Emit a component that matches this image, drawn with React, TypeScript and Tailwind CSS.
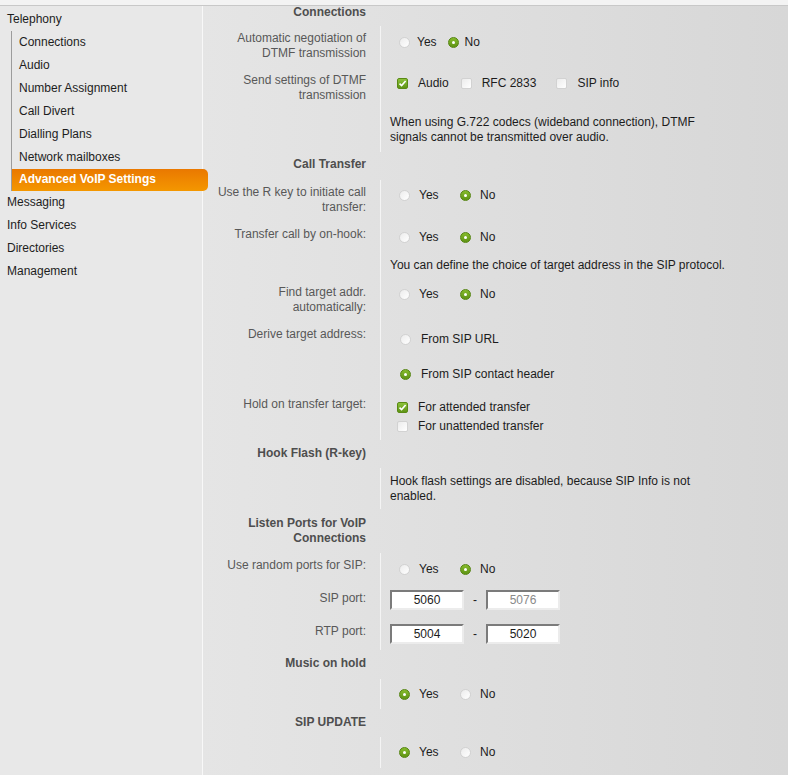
import type { ReactNode } from "react";

const menu = ["Connections", "Audio", "Number Assignment", "Call Divert", "Dialling Plans", "Network mailboxes"];
const bottomMenu = ["Messaging", "Info Services", "Directories", "Management"];

function Radio({ on, className = "" }: { on?: boolean; className?: string }) {
  if (on)
    return (
      <span className={`flex h-[11px] w-[11px] shrink-0 items-center justify-center rounded-full border border-[#54840f] bg-linear-to-b from-[#86bb2c] to-[#5f9414] ${className}`}>
        <span className="h-[3px] w-[3px] rounded-full bg-white" />
      </span>
    );
  return <span className={`block h-[11px] w-[11px] shrink-0 rounded-full border border-[#d2d2d2] bg-linear-to-br from-[#ececec] to-white ${className}`} />;
}

function Check({ on, className = "" }: { on?: boolean; className?: string }) {
  if (on)
    return (
      <span className={`flex h-[11px] w-[11px] shrink-0 items-center justify-center rounded-[2px] border border-[#5a8a14] bg-linear-to-b from-[#8cc23a] to-[#5f9414] ${className}`}>
        <svg width="9" height="9" viewBox="0 0 9 9">
          <path d="M1.5 4.6 L3.6 6.6 L7.6 2" fill="none" stroke="#fff" strokeWidth="1.6" />
        </svg>
      </span>
    );
  return <span className={`block h-[11px] w-[11px] shrink-0 rounded-[2px] border border-[#d2d2d2] bg-linear-to-br from-[#ececec] to-white ${className}`} />;
}

// radio pair laid out like the table cells of the device page
function YesNo({ yes }: { yes?: boolean }) {
  return (
    <div className="flex h-[15px] items-center">
      <Radio on={yes} className="ml-[9px]" />
      <span className="ml-[9px] w-[41px]">Yes</span>
      <Radio on={!yes} />
      <span className="ml-[9px]">No</span>
    </div>
  );
}

function Row({ h, lp = "pt-[5px]", vp, label, children }: { h: string; lp?: string; vp: string; label?: ReactNode; children?: ReactNode }) {
  return (
    <div className={`flex ${h}`}>
      <div className={`w-[177px] shrink-0 pr-[14px] text-right text-[#585858] ${lp}`}>{label}</div>
      <div className={`flex-1 border-l border-[#f4f4f4] pl-[9px] text-[#1c1c1c] ${vp}`}>{children}</div>
    </div>
  );
}

function Heading({ h, pt, children }: { h: string; pt: string; children: ReactNode }) {
  return <div className={`w-[177px] pr-[14px] text-right font-bold text-[#4e4e4e] ${h} ${pt}`}>{children}</div>;
}

function PortBox({ value, dim }: { value: string; dim?: boolean }) {
  return (
    <div
      className={`flex h-[20px] w-[74px] items-center justify-center border-2 border-t-[#7b7b7b] border-r-[#ececec] border-b-[#ececec] border-l-[#7b7b7b] bg-white ${dim ? "text-[#8a8a8a]" : "text-[#1c1c1c]"}`}
    >
      {value}
    </div>
  );
}

function Ports({ a, b, dim }: { a: string; b: string; dim?: boolean }) {
  return (
    <div className="flex items-center">
      <PortBox value={a} />
      <span className="w-[22px] text-center">-</span>
      <PortBox value={b} dim={dim} />
    </div>
  );
}

export default function App() {
  return (
    <div className="h-[775px] w-full overflow-hidden bg-[#e8e8e8] font-['Liberation_Sans',Arial,sans-serif] text-[12px] leading-[15px]">
      <div className="h-[6px] border-b border-[#c8c8c8] bg-[#f3f3f3]" />
      <div className="flex h-[769px]">
        <aside className="w-[203px] shrink-0 border-r border-[#f8f8f8] bg-[#e8e8e8] pt-[2px] text-[#1d1d1d]">
          <div className="h-[23px] pl-[7px] leading-[23px]">Telephony</div>
          <div className="ml-[11px] border-l border-[#9c9c9c]">
            {menu.map((m) => (
              <div key={m} className="h-[23px] pl-[7px] leading-[23px]">
                {m}
              </div>
            ))}
            <div className="relative z-10 h-[22px] w-[196px] rounded-r-[5px] bg-linear-to-b from-[#ea7800] to-[#f49700] pl-[7px] leading-[21px] font-bold text-white">
              Advanced VoIP Settings
            </div>
          </div>
          {bottomMenu.map((m) => (
            <div key={m} className="h-[23px] pl-[7px] leading-[23px]">
              {m}
            </div>
          ))}
        </aside>

        <main className="flex-1 bg-linear-to-r from-[#e5e5e5] to-[#d7d7d7]">
          <div className="-mt-[1px]">
            <Heading h="h-[21px]" pt="pt-0">Connections</Heading>
          </div>
          <Row h="h-[42px]" vp="pt-[9px]" label="Automatic negotiation of DTMF transmission">
            <div className="flex h-[15px] items-center">
              <Radio className="ml-[9px]" />
              <span className="ml-[7px]">Yes</span>
              <Radio on className="ml-[11px]" />
              <span className="ml-[6px]">No</span>
            </div>
          </Row>
          <Row h="h-[42px]" vp="pt-[8px]" label="Send settings of DTMF transmission">
            <div className="flex h-[15px] items-center">
              <Check on className="ml-[7px]" />
              <span className="ml-[10px]">Audio</span>
              <Check className="ml-[12px]" />
              <span className="ml-[10px]">RFC 2833</span>
              <Check className="ml-[20px]" />
              <span className="ml-[10px]">SIP info</span>
            </div>
          </Row>
          <Row h="h-[42px]" vp="pt-[5px]">
            <div className="w-[315px]">When using G.722 codecs (wideband connection), DTMF signals cannot be transmitted over audio.</div>
          </Row>

          <Heading h="h-[28px]" pt="pt-[5px]">Call Transfer</Heading>
          <Row h="h-[42px]" vp="pt-[8px]" label="Use the R key to initiate call transfer:">
            <YesNo />
          </Row>
          <Row h="h-[32px]" vp="pt-[8px]" label="Transfer call by on-hook:">
            <YesNo />
          </Row>
          <Row h="h-[26px]" vp="pt-[4px]">
            <div className="whitespace-nowrap">You can define the choice of target address in the SIP protocol.</div>
          </Row>
          <Row h="h-[42px]" vp="pt-[7px]" label="Find target addr. automatically:">
            <YesNo />
          </Row>
          <Row h="h-[70px]" vp="pt-[10px]" label="Derive target address:">
            <div className="flex h-[15px] items-center">
              <Radio className="ml-[10px]" />
              <span className="ml-[10px]">From SIP URL</span>
            </div>
            <div className="mt-[20px] flex h-[15px] items-center">
              <Radio on className="ml-[10px]" />
              <span className="ml-[10px]">From SIP contact header</span>
            </div>
          </Row>
          <Row h="h-[48px]" vp="pt-[6px]" label="Hold on transfer target:">
            <div className="flex h-[19px] items-center">
              <Check on className="ml-[7px]" />
              <span className="ml-[10px]">For attended transfer</span>
            </div>
            <div className="flex h-[19px] items-center">
              <Check className="ml-[7px]" />
              <span className="ml-[10px]">For unattended transfer</span>
            </div>
          </Row>

          <Heading h="h-[28px]" pt="pt-[6px]">Hook Flash (R-key)</Heading>
          <Row h="h-[41px]" vp="pt-[6px]">
            <div className="w-[315px]">Hook flash settings are disabled, because SIP Info is not enabled.</div>
          </Row>

          <Heading h="h-[44px]" pt="pt-[7px]">Listen Ports for VoIP Connections</Heading>
          <Row h="h-[33px]" vp="pt-[9px]" label="Use random ports for SIP:">
            <YesNo />
          </Row>
          <Row h="h-[33px]" vp="pt-[4px]" label="SIP port:">
            <Ports a="5060" b="5076" dim />
          </Row>
          <Row h="h-[31px]" vp="pt-[5px]" label="RTP port:">
            <Ports a="5004" b="5020" />
          </Row>

          <Heading h="h-[29px]" pt="pt-[6px]">Music on hold</Heading>
          <Row h="h-[30px]" vp="pt-[8px]">
            <YesNo yes />
          </Row>

          <Heading h="h-[28px]" pt="pt-[6px]">SIP UPDATE</Heading>
          <Row h="h-[31px]" vp="pt-[8px]">
            <YesNo yes />
          </Row>
        </main>
      </div>
    </div>
  );
}
